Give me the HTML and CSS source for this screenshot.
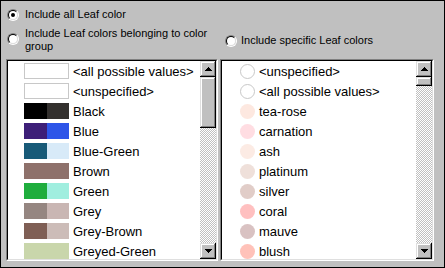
FILE: index.html
```html
<!DOCTYPE html>
<html lang="en">
<head>
  <meta charset="UTF-8" />
  <meta name="viewport" content="width=device-width, initial-scale=1.0"/>
  <title>Leaf Color</title>
  <link rel="stylesheet" href="styles.css">
</head>
<body>

  <div class="panel">
    <div class="options options-left">
      <label class="option">
        <span class="radio checked"><span class="radio-inner"></span></span>
        <span>Include all Leaf color</span>
      </label>
      <label class="option option-wrap">
        <span class="radio"><span class="radio-inner"></span></span>
        <span>Include Leaf colors belonging to color<br>group</span>
      </label>
    </div>
    <div class="options options-right">
      <label class="option">
        <span class="radio"><span class="radio-inner"></span></span>
        <span>Include specific Leaf colors</span>
      </label>
    </div>

    <!-- color groups -->
    <div class="listbox">
      <div class="listbox-inner">
        <ul class="items swatches">
          <li><span class="swatch empty"></span>&lt;all possible values&gt;</li>
          <li><span class="swatch empty"></span>&lt;unspecified&gt;</li>
          <li><span class="swatch"><i style="background:#000000"></i><i style="background:#33302e"></i></span>Black</li>
          <li><span class="swatch"><i style="background:#3d1f78"></i><i style="background:#2e55e8"></i></span>Blue</li>
          <li><span class="swatch"><i style="background:#185a78"></i><i style="background:#d8eaf8"></i></span>Blue-Green</li>
          <li><span class="swatch"><i style="background:#8e716b"></i><i style="background:#8e716b"></i></span>Brown</li>
          <li><span class="swatch"><i style="background:#1fad3d"></i><i style="background:#a0eedf"></i></span>Green</li>
          <li><span class="swatch"><i style="background:#958681"></i><i style="background:#c9b6b3"></i></span>Grey</li>
          <li><span class="swatch"><i style="background:#7f5f55"></i><i style="background:#ccbcb8"></i></span>Grey-Brown</li>
          <li><span class="swatch"><i style="background:#c9d6ab"></i><i style="background:#c9d6ab"></i></span>Greyed-Green</li>
        </ul>
        <div class="scrollbar">
          <div class="scroll-btn">
            <svg width="7" height="4" viewBox="0 0 7 4" shape-rendering="crispEdges"><path d="M3 0h1v1h1v1h1v1h1v1H0V3h1V2h1V1h1z"/></svg>
          </div>
          <div class="thumb thumb-large"></div>
          <div class="track"></div>
          <div class="scroll-btn">
            <svg width="7" height="4" viewBox="0 0 7 4" shape-rendering="crispEdges"><path d="M0 0h7v1H6v1H5v1H4v1H3V3H2V2H1V1H0z"/></svg>
          </div>
        </div>
      </div>
    </div>

    <!-- specific colors -->
    <div class="listbox">
      <div class="listbox-inner">
        <ul class="items dots">
          <li><span class="dot empty"></span>&lt;unspecified&gt;</li>
          <li><span class="dot empty"></span>&lt;all possible values&gt;</li>
          <li><span class="dot" style="background:#fde8e0"></span>tea-rose</li>
          <li><span class="dot" style="background:#ffdde2"></span>carnation</li>
          <li><span class="dot" style="background:#fcebe4"></span>ash</li>
          <li><span class="dot" style="background:#efe0da"></span>platinum</li>
          <li><span class="dot" style="background:#e1cdc8"></span>silver</li>
          <li><span class="dot" style="background:#ffc0c0"></span>coral</li>
          <li><span class="dot" style="background:#d9c2c2"></span>mauve</li>
          <li><span class="dot" style="background:#ffc2b9"></span>blush</li>
        </ul>
        <div class="scrollbar">
          <div class="scroll-btn">
            <svg width="7" height="4" viewBox="0 0 7 4" shape-rendering="crispEdges"><path d="M3 0h1v1h1v1h1v1h1v1H0V3h1V2h1V1h1z"/></svg>
          </div>
          <div class="thumb thumb-small"></div>
          <div class="track"></div>
          <div class="scroll-btn">
            <svg width="7" height="4" viewBox="0 0 7 4" shape-rendering="crispEdges"><path d="M0 0h7v1H6v1H5v1H4v1H3V3H2V2H1V1H0z"/></svg>
          </div>
        </div>
      </div>
    </div>
  </div>

</body>
</html>
```

FILE: styles.css
```css
body {
  margin: 0;
  font-family: "Liberation Sans", Arial, sans-serif;
}
.panel {
  box-sizing: border-box;
  width: 445px;
  height: 268px;
  background: #c0c0c0;
  border: 1px solid #000;
  padding: 0 10px 6px 5px;
  display: grid;
  grid-template-columns: 212px 214px;
  grid-template-rows: 58px 202px;
  column-gap: 2px;
}
.options {
  font-size: 11px;
  line-height: 13px;
  color: #000;
}
.options-left {
  padding: 7px 0 0 1px;
  display: flex;
  flex-direction: column;
  gap: 6px;
}
.options-right {
  padding: 33px 0 0 5px;
}
.option {
  display: flex;
  align-items: center;
  gap: 6px;
}
.options-right .option {
  gap: 4px;
}
.option-wrap {
  align-items: flex-start;
}
.option-wrap .radio {
  margin-top: 6px;
}
.radio {
  box-sizing: border-box;
  flex: none;
  width: 12px;
  height: 12px;
  border-radius: 50%;
  border: 1px solid;
  border-color: #808080 #fff #fff #808080;
  position: relative;
}
.radio-inner {
  box-sizing: border-box;
  display: block;
  width: 100%;
  height: 100%;
  border-radius: 50%;
  border: 1px solid;
  border-color: #000 #dfdfdf #dfdfdf #000;
  background: #fff;
}
.radio.checked::after {
  content: "";
  position: absolute;
  left: 3px;
  top: 3px;
  width: 4px;
  height: 4px;
  border-radius: 50%;
  background: #000;
}
.listbox {
  border: 1px solid;
  border-color: #808080 #fff #fff #808080;
}
.listbox-inner {
  height: 100%;
  box-sizing: border-box;
  border: 1px solid;
  border-color: #000 #dfdfdf #dfdfdf #000;
  background: #fff;
  display: flex;
  overflow: hidden;
}
.items {
  list-style: none;
  margin: 0;
  padding: 0;
  flex: 1;
  font-size: 13px;
  color: #000;
}
.items li {
  height: 20px;
  display: flex;
  align-items: center;
  gap: 4px;
  white-space: nowrap;
}
.swatches li {
  padding-left: 16px;
}
.dots li {
  padding-left: 18px;
}
.swatch {
  box-sizing: border-box;
  width: 45px;
  height: 16px;
  display: flex;
}
.swatch i {
  flex: 1;
}
.swatch.empty {
  border: 1px solid #c8c8c8;
}
.dot {
  box-sizing: border-box;
  width: 15px;
  height: 15px;
  border-radius: 50%;
}
.dot.empty {
  border: 1px solid #c8c8c8;
}
.scrollbar {
  width: 16px;
  flex: none;
  display: flex;
  flex-direction: column;
}
.scroll-btn, .thumb {
  box-sizing: border-box;
  background: #c0c0c0;
  box-shadow: inset -1px -1px #000, inset 1px 1px #dfdfdf, inset -2px -2px #808080, inset 2px 2px #fff;
}
.scroll-btn {
  height: 16px;
  display: flex;
  align-items: center;
  justify-content: center;
}
.thumb-large {
  height: 51px;
}
.thumb-small {
  height: 9px;
}
.track {
  flex: 1;
  background: repeating-conic-gradient(#c0c0c0 0 25%, #fff 0 50%) 0 0 / 2px 2px;
}
```
